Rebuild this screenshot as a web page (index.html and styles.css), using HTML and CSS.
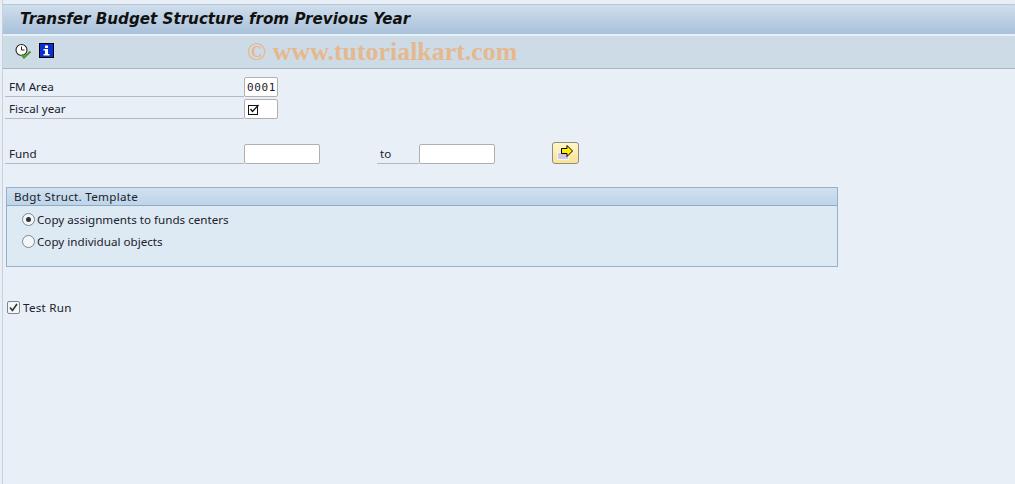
FILE: index.html
```html
<!DOCTYPE html>
<html lang="en">

<head>
    <meta charset="UTF-8">
    <meta name="viewport" content="width=device-width, initial-scale=1.0">
    <title>Transfer Budget Structure from Previous Year</title>
    <link rel="stylesheet" href="styles.css">
</head>

<body>
    <div class="screen">
        <div class="title-bar">
            <h1>Transfer Budget Structure from Previous Year</h1>
        </div>

        <div class="toolbar">
            <svg class="tool-icon" width="17" height="17" viewBox="0 0 17 17">
                <circle cx="6.5" cy="8" r="5.5" fill="#fff" stroke="#222" stroke-width="1.1" />
                <path d="M6.5 4.5V8H9.5" fill="none" stroke="#222" stroke-width="1" />
                <path d="M6.5 12.5L9 15.5L15.5 9.5" fill="none" stroke="#4c9a2a" stroke-width="2.2" />
            </svg>
            <svg class="tool-icon info-icon" width="15" height="15" viewBox="0 0 15 15">
                <rect width="15" height="15" fill="#000" />
                <rect x="1" y="1" width="13" height="13" fill="#0a2fd0" />
                <rect x="6" y="2.5" width="3" height="2.5" fill="#fff" />
                <path d="M4.5 6H9V11H10.5V12.5H4.5V11H6V7.5H4.5Z" fill="#fff" />
            </svg>
            <span class="watermark">© www.tutorialkart.com</span>
        </div>

        <div class="content">
            <div class="field-row">
                <label class="field-label">FM Area</label>
                <div class="input small-input">0001</div>
            </div>
            <div class="field-row second-row">
                <label class="field-label">Fiscal year</label>
                <div class="input small-input">
                    <svg width="14" height="14" viewBox="0 0 14 14">
                        <rect x="1.5" y="3.5" width="9" height="9" fill="none" stroke="#111" />
                        <path d="M3.5 7L5.5 9.5L11.5 3" fill="none" stroke="#111" stroke-width="1.3" />
                    </svg>
                </div>
            </div>

            <div class="field-row fund-row">
                <label class="field-label">Fund</label>
                <div class="input wide-input"></div>
                <label class="to-label">to</label>
                <div class="input wide-input"></div>
                <button class="select-btn" type="button">
                    <svg width="17" height="16" viewBox="0 0 17 16">
                        <rect x="0.5" y="7.5" width="11" height="7" fill="#d5c6e0" stroke="#f6f2f6" />
                        <path d="M4.5 3.5H10V0.5L15.5 6L10 11.5V8.5H4.5Z" fill="#ffee00" stroke="#000" />
                    </svg>
                </button>
            </div>

            <div class="group-box">
                <div class="group-title">Bdgt Struct. Template</div>
                <div class="group-body">
                    <div class="radio-row">
                        <span class="radio radio-on"></span>
                        <span>Copy assignments to funds centers</span>
                    </div>
                    <div class="radio-row">
                        <span class="radio"></span>
                        <span>Copy individual objects</span>
                    </div>
                </div>
            </div>

            <div class="check-row">
                <span class="check">
                    <svg width="9" height="9" viewBox="0 0 9 9">
                        <path d="M1 4.5L3.5 7.5L8 1" fill="none" stroke="#333" stroke-width="1.6" />
                    </svg>
                </span>
                <span class="check-text">Test Run</span>
            </div>
        </div>
    </div>
</body>

</html>
```

FILE: styles.css
```css
html,
body {
    height: 100%;
}

body {
    font-family: 'Noto Sans', 'Open Sans', sans-serif;
    font-size: 11.65px;
    color: #1a222c;
    background-color: #e8eff6;
    margin: 0;
    padding: 0;
    overflow: hidden;
}

.screen {
    box-sizing: border-box;
    height: 100%;
    margin-left: 2px;
    padding-top: 4px;
    border-left: 1px solid #c8d2dc;
}

.title-bar {
    height: 29px;
    border-top: 1px solid #b9c8d8;
    border-bottom: 2px solid #e8f0f7;
    background: linear-gradient(to bottom, #cfdeec, #a9c1da);
    display: flex;
    align-items: center;
    padding-left: 17px;
}

.title-bar h1 {
    margin: 0 0 2px;
    font-family: 'DejaVu Sans', sans-serif;
    font-size: 15.15px;
    font-weight: bold;
    font-style: italic;
    color: #111;
}

.toolbar {
    height: 32px;
    border-bottom: 1px solid #a8b5c2;
    background-color: #cddbe7;
    display: flex;
    align-items: center;
    padding-left: 12px;
}

.tool-icon {
    margin-right: 7px;
    margin-bottom: 3px;
}

.info-icon {
    margin-right: 0;
}

.watermark {
    margin-left: 193px;
    font-family: 'Liberation Serif', serif;
    font-size: 25.9px;
    font-weight: bold;
    color: #e6b88e;
    white-space: nowrap;
}

.content {
    padding: 7px 0 0 2px;
}

.field-row {
    display: flex;
    align-items: flex-end;
    height: 21px;
}

.second-row {
    margin-top: 1px;
}

.fund-row {
    margin-top: 24px;
}

.field-label {
    width: 239px;
    height: 20px;
    line-height: 20px;
    box-sizing: border-box;
    padding-left: 4px;
    border-bottom: 1px solid #b4b9bf;
}

.input {
    box-sizing: border-box;
    height: 20px;
    background-color: #fff;
    border: 1px solid #b0b0b0;
    border-radius: 2px;
    display: flex;
    align-items: center;
    padding-left: 2px;
    letter-spacing: 0.6px;
    font-family: 'DejaVu Sans Mono', monospace;
    font-size: 11px;
}

.small-input {
    width: 34px;
}

.wide-input {
    width: 76px;
}

.to-label {
    width: 42px;
    height: 20px;
    line-height: 20px;
    box-sizing: border-box;
    margin-left: 57px;
    padding-left: 3px;
    border-bottom: 1px solid #b4b9bf;
}

.select-btn {
    width: 27px;
    height: 22px;
    margin-left: 57px;
    margin-bottom: 0;
    padding: 0;
    border: 1px solid #8d8d80;
    border-radius: 3px;
    background: linear-gradient(to bottom, #fff6c8, #fbe396);
    display: flex;
    align-items: center;
    justify-content: center;
}

.group-box {
    box-sizing: border-box;
    width: 832px;
    height: 80px;
    margin-top: 23px;
    margin-left: 1px;
    border: 1px solid #94b0cc;
    background-color: #deeaf3;
}

.group-title {
    height: 17px;
    line-height: 17px;
    padding-left: 7px;
    letter-spacing: 0.28px;
    border-bottom: 1px solid #8fa9c6;
    background: linear-gradient(to bottom, #d2e1ef, #bdd4e9);
}

.group-body {
    padding-top: 2px;
}

.radio-row {
    display: flex;
    align-items: center;
    height: 22px;
    padding-left: 15px;
}

.radio {
    box-sizing: border-box;
    width: 13px;
    height: 13px;
    margin-right: 2px;
    border: 1px solid #7d8790;
    border-radius: 50%;
    background-color: #f4f7fa;
    display: flex;
    align-items: center;
    justify-content: center;
}

.radio-on::after {
    content: "";
    width: 5px;
    height: 5px;
    border-radius: 50%;
    background-color: #333;
}

.check-row {
    display: flex;
    align-items: center;
    height: 20px;
    margin-top: 30px;
    margin-left: 2px;
}

.check {
    box-sizing: border-box;
    width: 13px;
    height: 13px;
    margin-right: 3px;
    border: 1px solid #7d8790;
    border-radius: 2px;
    background-color: #f4f7fa;
    display: flex;
    align-items: center;
    justify-content: center;
}

.check-text {
    letter-spacing: 0.25px;
}
```
